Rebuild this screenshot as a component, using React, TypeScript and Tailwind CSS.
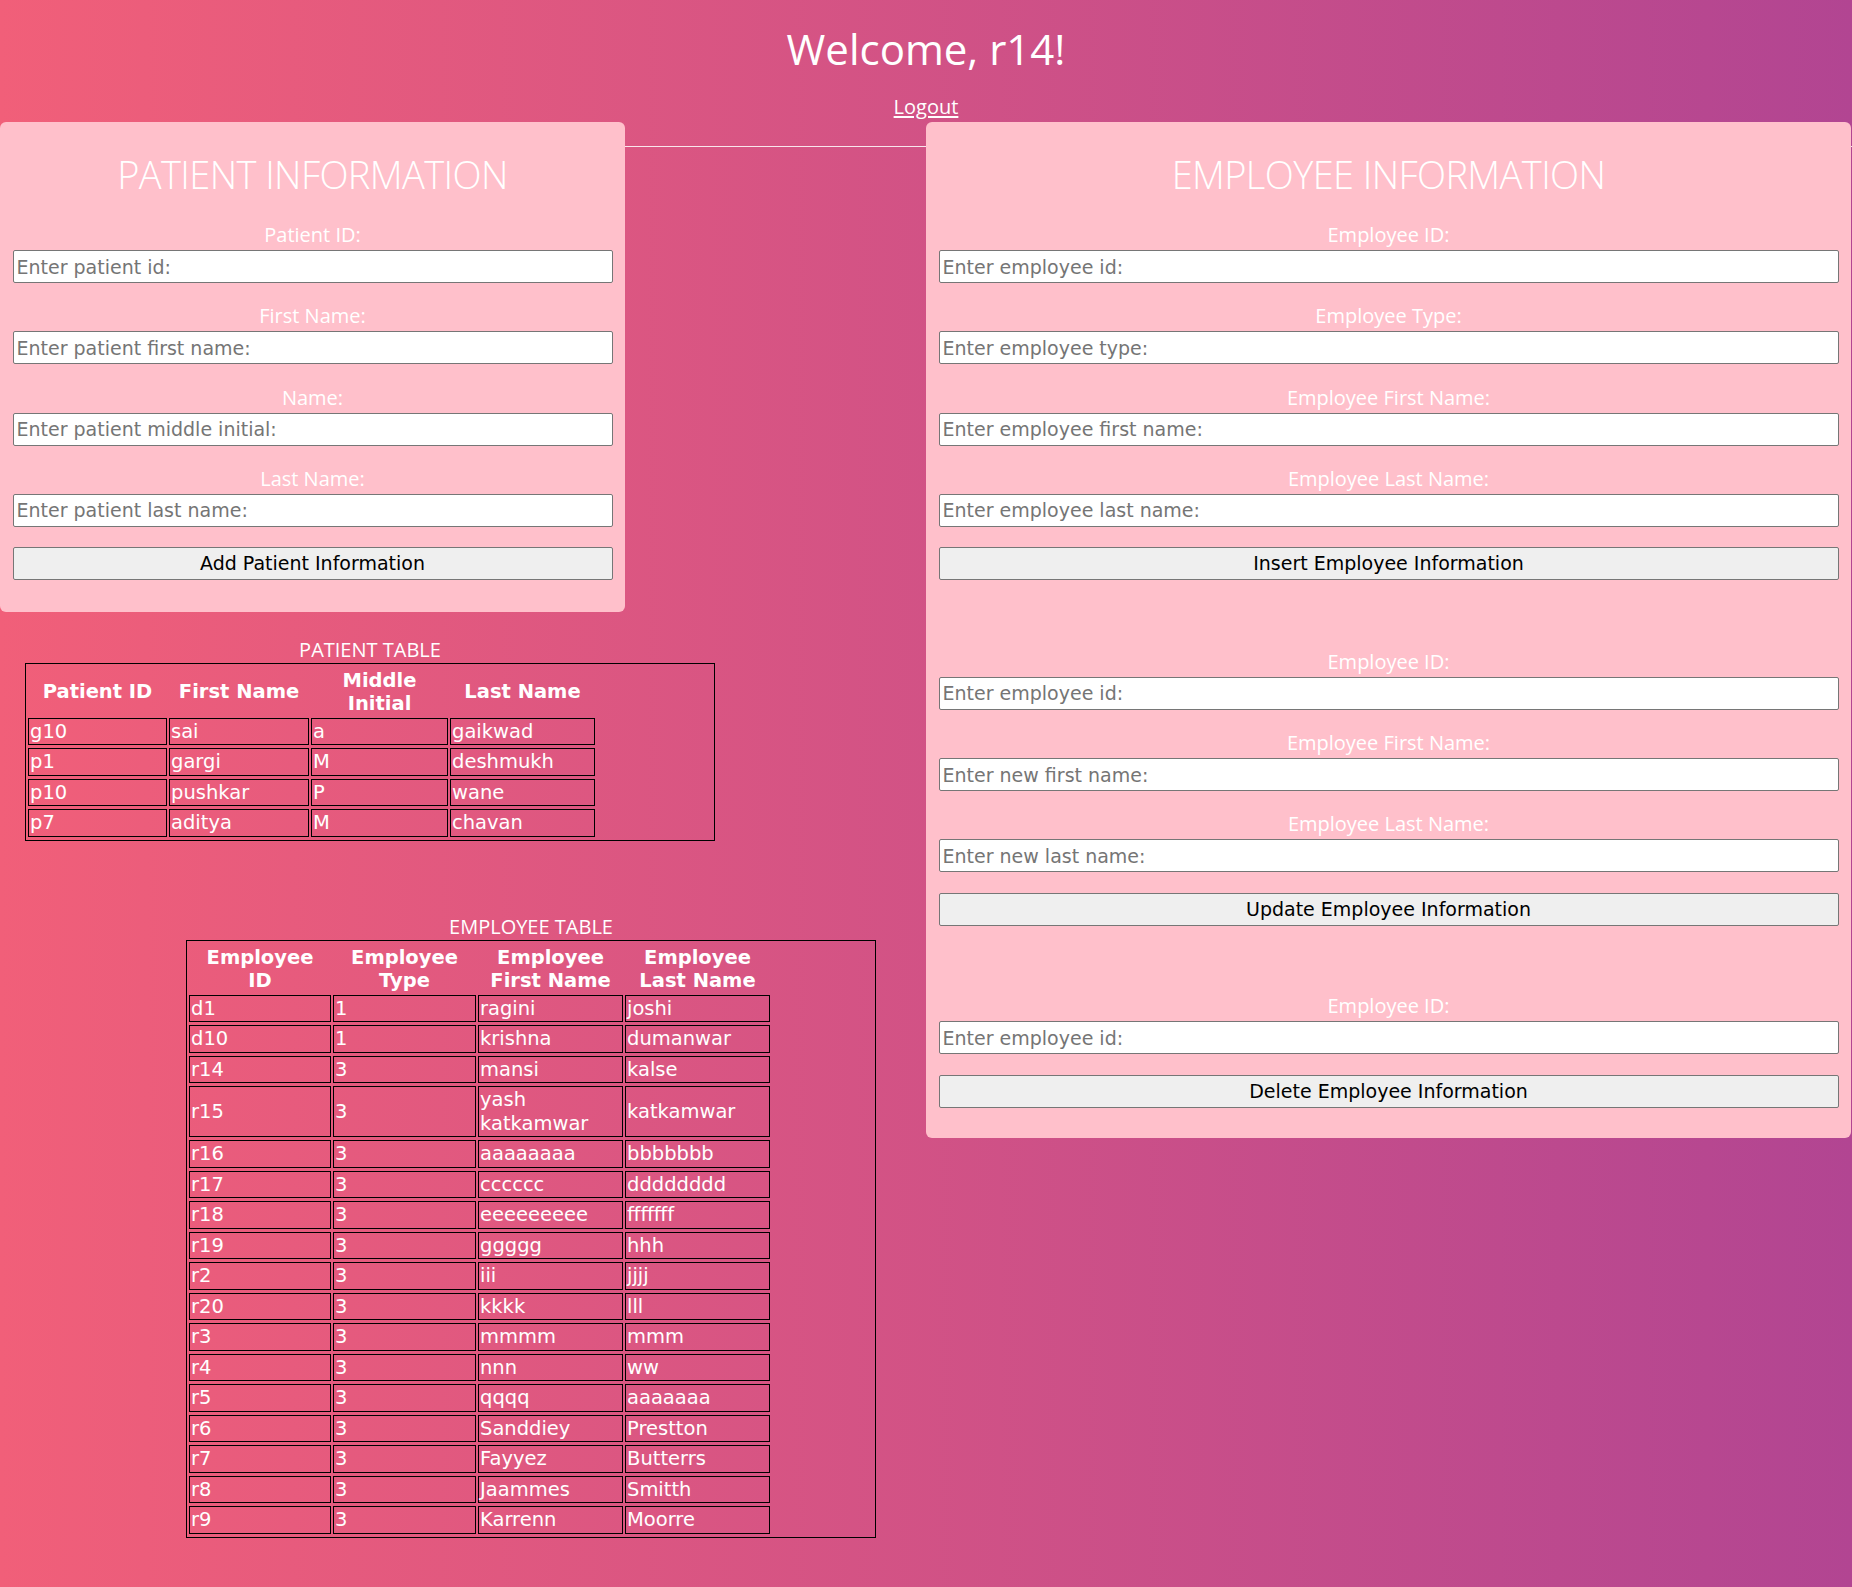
import React from "react";

const patients: string[][] = [
  ["g10", "sai", "a", "gaikwad"],
  ["p1", "gargi", "M", "deshmukh"],
  ["p10", "pushkar", "P", "wane"],
  ["p7", "aditya", "M", "chavan"],
];

const employees: string[][] = [
  ["d1", "1", "ragini", "joshi"],
  ["d10", "1", "krishna", "dumanwar"],
  ["r14", "3", "mansi", "kalse"],
  ["r15", "3", "yash katkamwar", "katkamwar"],
  ["r16", "3", "aaaaaaaa", "bbbbbbb"],
  ["r17", "3", "cccccc", "dddddddd"],
  ["r18", "3", "eeeeeeeee", "fffffff"],
  ["r19", "3", "ggggg", "hhh"],
  ["r2", "3", "iii", "jjjj"],
  ["r20", "3", "kkkk", "lll"],
  ["r3", "3", "mmmm", "mmm"],
  ["r4", "3", "nnn", "ww"],
  ["r5", "3", "qqqq", "aaaaaaa"],
  ["r6", "3", "Sanddiey", "Prestton"],
  ["r7", "3", "Fayyez", "Butterrs"],
  ["r8", "3", "Jaammes", "Smitth"],
  ["r9", "3", "Karrenn", "Moorre"],
];

function Field({ label, placeholder, first }: { label: string; placeholder: string; first?: boolean }) {
  return (
    <div className={first ? "" : "mt-[19.3px]"}>
      <div className="h-[27px] text-center font-['Open_Sans',sans-serif] text-[20px] leading-[27px] text-white">
        {label}
      </div>
      <input
        type="text"
        placeholder={placeholder}
        className="mt-[2px] block h-[33px] w-full rounded-[2px] border border-[#767676] bg-white px-[3px] font-['DejaVu_Sans',sans-serif] text-[19px] text-black outline-none placeholder:text-[#757575]"
      />
    </div>
  );
}

function Btn({ children }: { children: React.ReactNode }) {
  return (
    <button
      type="button"
      className="mt-[20.5px] block h-[33px] w-full rounded-[2px] border border-[#767676] bg-[#efefef] text-center font-['DejaVu_Sans',sans-serif] text-[19px] leading-[31px] text-black"
    >
      {children}
    </button>
  );
}

function Heading({ children }: { children: React.ReactNode }) {
  return (
    <h2 className="text-center font-['Open_Sans',sans-serif] text-[38px] font-light leading-[46px] tracking-[-0.6px] text-white">
      {children}
    </h2>
  );
}

function DataTable({
  title,
  headers,
  widths,
  rows,
  tableWidth,
}: {
  title: string;
  headers: React.ReactNode[];
  widths: number[];
  rows: string[][];
  tableWidth: number;
}) {
  return (
    <div className="w-[690px]">
      <div className="h-[27px] text-center font-['Open_Sans',sans-serif] text-[20px] leading-[27px] text-white">
        {title}
      </div>
      <div className="border border-black">
        <table
          className="table-fixed border-separate border-spacing-x-[2px] border-spacing-y-[3px] font-['DejaVu_Sans',sans-serif] text-[19.5px] text-white"
          style={{ width: tableWidth }}
        >
          <thead>
            <tr>
              {headers.map((h, i) => (
                <th
                  key={i}
                  className="px-[1px] pb-[0px] pt-[2px] text-center align-middle font-bold leading-[23px]"
                  style={{ width: widths[i] }}
                >
                  {h}
                </th>
              ))}
            </tr>
          </thead>
          <tbody>
            {rows.map((r, ri) => (
              <tr key={ri}>
                {r.map((c, ci) => (
                  <td
                    key={ci}
                    className="border border-black px-[1px] py-[1px] text-left align-middle leading-[23.5px]"
                  >
                    {c}
                  </td>
                ))}
              </tr>
            ))}
          </tbody>
        </table>
      </div>
    </div>
  );
}

export default function App() {
  return (
    <div className="min-h-screen w-full bg-[linear-gradient(to_right,#f15f79,#b24592)] text-white">
      <div className="flex flex-col items-center">
        <h1 className="pt-[20px] font-['Open_Sans',sans-serif] text-[42px] font-normal leading-[57px] text-white">
          Welcome, r14!
        </h1>
        <a
          href="#"
          className="mt-[16px] font-['Open_Sans',sans-serif] text-[20px] leading-[27px] text-white underline underline-offset-[2px]"
        >
          Logout
        </a>
      </div>

      <div className="relative mt-[1.5px] flex">
        <div className="absolute left-0 right-0 top-[24.5px] h-px bg-white/85" />

        <div className="relative w-[926px] shrink-0">
          <div className="w-[625px] rounded-[6px] bg-[#ffc0cb] px-[12.5px] pb-[32px] pt-[29.5px]">
            <Heading>PATIENT INFORMATION</Heading>
            <div className="mt-[24px]">
              <Field first label="Patient ID:" placeholder="Enter patient id:" />
              <Field label="First Name:" placeholder="Enter patient first name:" />
              <Field label="Name:" placeholder="Enter patient middle initial:" />
              <Field label="Last Name:" placeholder="Enter patient last name:" />
              <Btn>Add Patient Information</Btn>
            </div>
          </div>

          <div className="ml-[25px] mt-[23.6px]">
            <DataTable
              title="PATIENT TABLE"
              headers={[
                "Patient ID",
                "First Name",
                <>
                  Middle
                  <br />
                  Initial
                </>,
                "Last Name",
              ]}
              widths={[139, 140, 137, 145]}
              tableWidth={571}
              rows={patients}
            />
          </div>

          <div className="ml-[186px] mt-[72px]">
            <DataTable
              title="EMPLOYEE TABLE"
              headers={[
                <>
                  Employee
                  <br />
                  ID
                </>,
                <>
                  Employee
                  <br />
                  Type
                </>,
                <>
                  Employee
                  <br />
                  First Name
                </>,
                <>
                  Employee
                  <br />
                  Last Name
                </>,
              ]}
              widths={[142, 143, 145, 145]}
              tableWidth={585}
              rows={employees}
            />
          </div>
        </div>

        <div className="relative w-[925px] shrink-0">
          <div className="rounded-[6px] bg-[#ffc0cb] px-[12.5px] pb-[30.5px] pt-[29.5px]">
            <Heading>EMPLOYEE INFORMATION</Heading>
            <div className="mt-[24px]">
              <Field first label="Employee ID:" placeholder="Enter employee id:" />
              <Field label="Employee Type:" placeholder="Enter employee type:" />
              <Field label="Employee First Name:" placeholder="Enter employee first name:" />
              <Field label="Employee Last Name:" placeholder="Enter employee last name:" />
              <Btn>Insert Employee Information</Btn>
            </div>
            <div className="mt-[67.5px]">
              <Field first label="Employee ID:" placeholder="Enter employee id:" />
              <Field label="Employee First Name:" placeholder="Enter new first name:" />
              <Field label="Employee Last Name:" placeholder="Enter new last name:" />
              <Btn>Update Employee Information</Btn>
            </div>
            <div className="mt-[66.5px]">
              <Field first label="Employee ID:" placeholder="Enter employee id:" />
              <Btn>Delete Employee Information</Btn>
            </div>
          </div>
        </div>
      </div>
    </div>
  );
}
